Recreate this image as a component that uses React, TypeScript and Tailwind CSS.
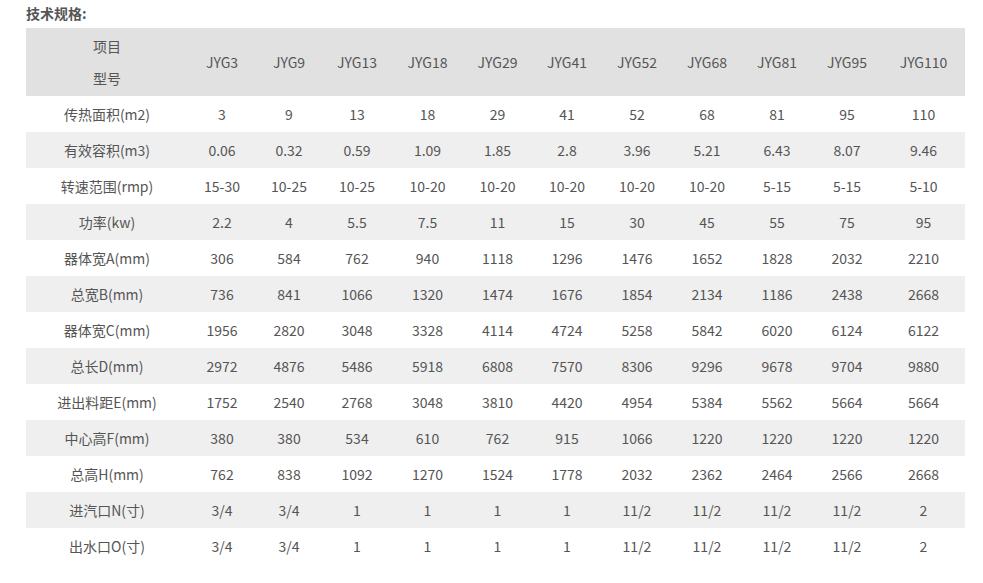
import React from "react";

const cols = ["JYG3","JYG9","JYG13","JYG18","JYG29","JYG41","JYG52","JYG68","JYG81","JYG95","JYG110"];
const widths = [162, 68, 66, 70, 71, 69, 70, 70, 70, 70, 70, 83];

const rows: [string, string[]][] = [
  ["传热面积(m2)", ["3","9","13","18","29","41","52","68","81","95","110"]],
  ["有效容积(m3)", ["0.06","0.32","0.59","1.09","1.85","2.8","3.96","5.21","6.43","8.07","9.46"]],
  ["转速范围(rmp)", ["15-30","10-25","10-25","10-20","10-20","10-20","10-20","10-20","5-15","5-15","5-10"]],
  ["功率(kw)", ["2.2","4","5.5","7.5","11","15","30","45","55","75","95"]],
  ["器体宽A(mm)", ["306","584","762","940","1118","1296","1476","1652","1828","2032","2210"]],
  ["总宽B(mm)", ["736","841","1066","1320","1474","1676","1854","2134","1186","2438","2668"]],
  ["器体宽C(mm)", ["1956","2820","3048","3328","4114","4724","5258","5842","6020","6124","6122"]],
  ["总长D(mm)", ["2972","4876","5486","5918","6808","7570","8306","9296","9678","9704","9880"]],
  ["进出料距E(mm)", ["1752","2540","2768","3048","3810","4420","4954","5384","5562","5664","5664"]],
  ["中心高F(mm)", ["380","380","534","610","762","915","1066","1220","1220","1220","1220"]],
  ["总高H(mm)", ["762","838","1092","1270","1524","1778","2032","2362","2464","2566","2668"]],
  ["进汽口N(寸)", ["3/4","3/4","1","1","1","1","11/2","11/2","11/2","11/2","2"]],
  ["出水口O(寸)", ["3/4","3/4","1","1","1","1","11/2","11/2","11/2","11/2","2"]],
];

export default function App() {
  return (
    <div
      className="w-[983px] h-[583px] bg-white text-[#555] pl-[26px]"
      style={{ fontFamily: '"Noto Sans CJK SC", "Noto Sans", sans-serif' }}
    >
      <div className="h-[28px] pt-[4px] text-[14px] leading-[18px] font-bold text-[#555]">技术规格:</div>
      <table className="table-fixed border-collapse w-[939px] text-[14px]">
        <colgroup>
          {widths.map((w, i) => (
            <col key={i} style={{ width: w }} />
          ))}
        </colgroup>
        <thead>
          <tr className="bg-[#e1e1e1] h-[68px]">
            <th className="font-normal p-0 text-center leading-[32px]">
              <div>项目</div>
              <div>型号</div>
            </th>
            {cols.map((c) => (
              <th key={c} className="font-normal p-0 text-center">{c}</th>
            ))}
          </tr>
        </thead>
        <tbody>
          {rows.map(([label, vals], i) => (
            <tr key={label} className={`h-[36px] ${i % 2 === 1 ? "bg-[#efefef]" : "bg-white"}`}>
              <td className="p-0 text-center">{label}</td>
              {vals.map((v, j) => (
                <td key={j} className="p-0 text-center">{v}</td>
              ))}
            </tr>
          ))}
        </tbody>
      </table>
    </div>
  );
}
